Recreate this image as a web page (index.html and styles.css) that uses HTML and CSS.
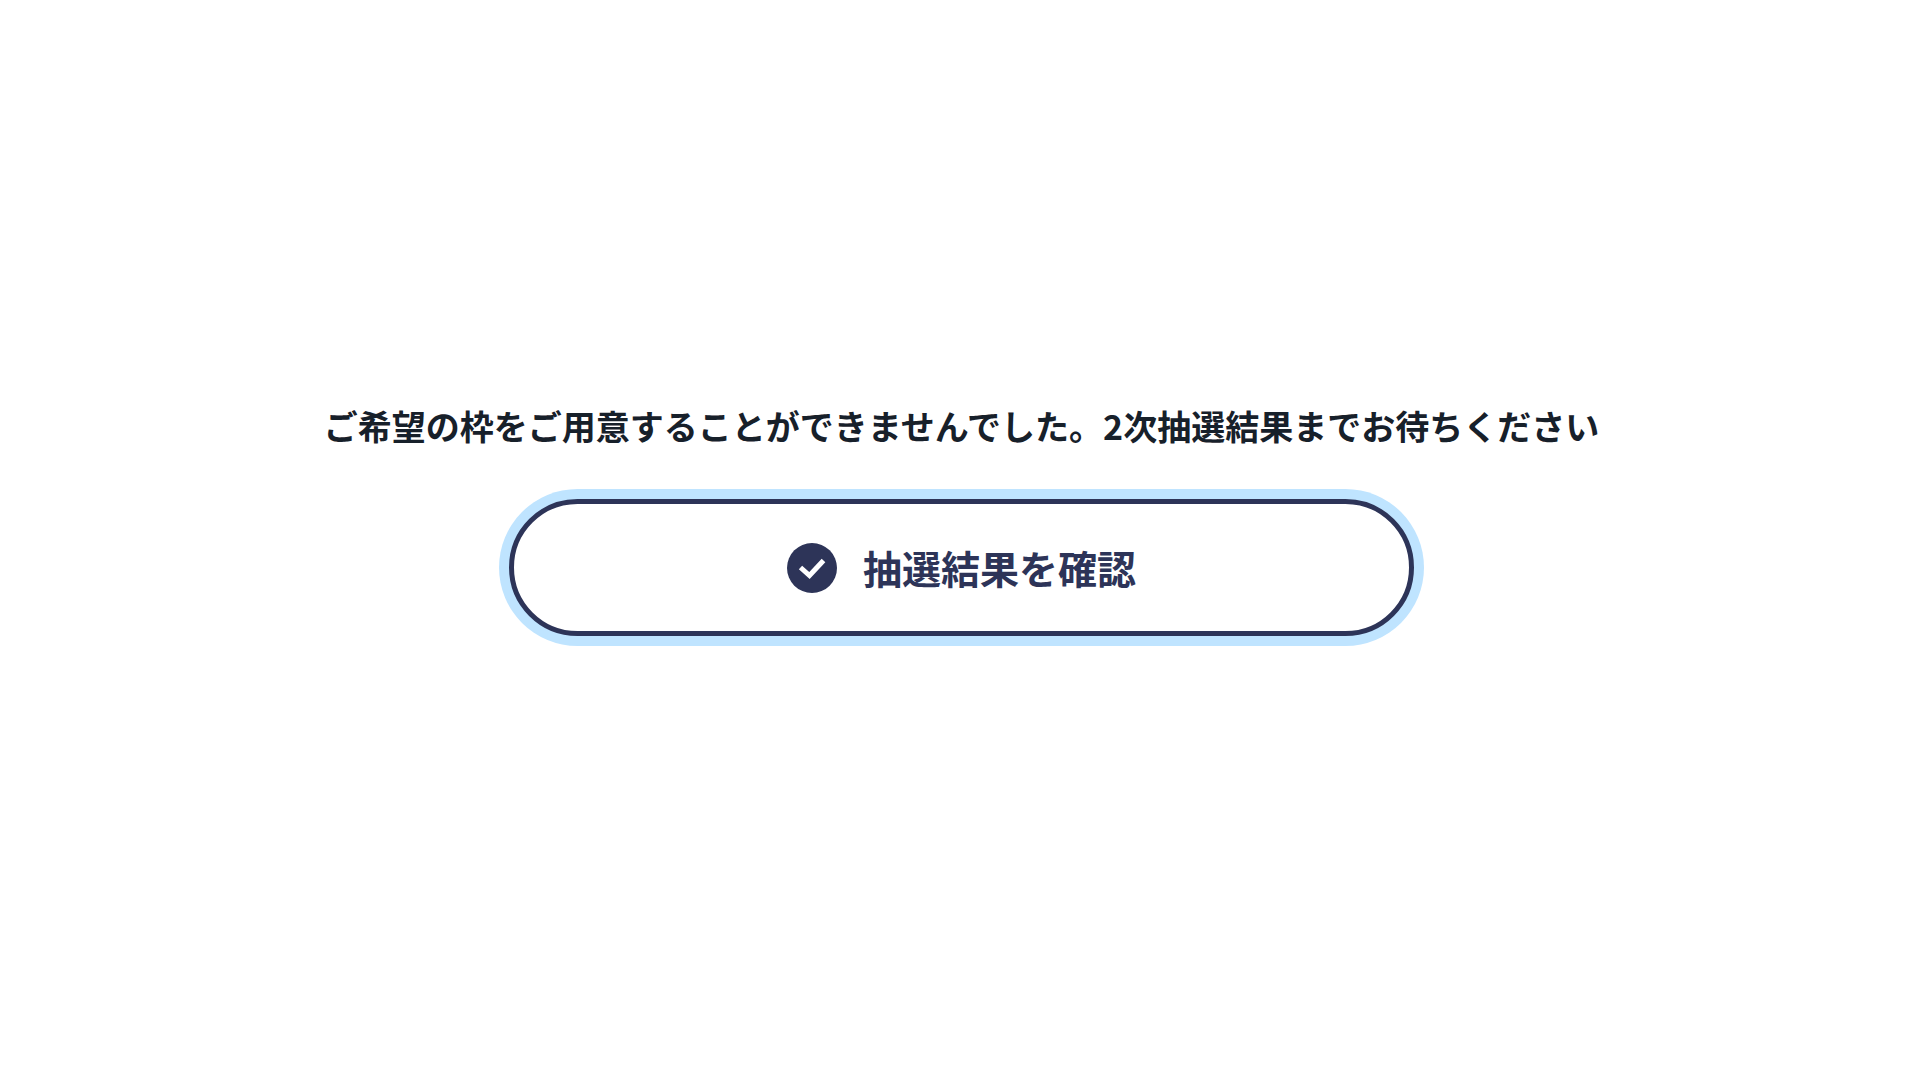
FILE: index.html
```html
<!DOCTYPE html>
<html lang="ja">
<head>
  <meta charset="utf-8">
  <meta name="viewport" content="width=device-width, initial-scale=1">
  <title>抽選結果</title>
  <link rel="stylesheet" href="styles.css">
</head>
<body>
  <main class="result">
    <p class="result-message">ご希望の枠をご用意することができませんでした。2次抽選結果までお待ちください</p>
    <button class="result-button" type="button">
      <svg class="result-icon" viewBox="0 0 50 50" aria-hidden="true">
        <circle cx="25" cy="25" r="25" fill="currentColor"/>
        <path d="M13.5 24.5L22.5 32.5L36.5 17.5" fill="none" stroke="#fff" stroke-width="5"/>
      </svg>
      <span>抽選結果を確認</span>
    </button>
  </main>
</body>
</html>
```
FILE: styles.css
```css
* {
  box-sizing: border-box;
}

body {
  margin: 0;
  background: #fff;
  color: #17202a;
  font-family: "Noto Sans CJK JP", sans-serif;
}

.result {
  display: flex;
  flex-direction: column;
  align-items: center;
  gap: 48px;
  padding: 400px 24px 40px 27px;
}

.result-message {
  margin: 0;
  font-size: 34px;
  font-weight: 700;
  line-height: 51px;
  text-align: center;
}

.result-button {
  display: flex;
  align-items: center;
  justify-content: center;
  gap: 26px;
  width: 100%;
  max-width: 905px;
  padding: 34px 24px;
  border: 5px solid #2d3458;
  border-radius: 69px;
  background: #fff;
  box-shadow: 0 0 0 10px #bfe4ff;
  color: #2d3458;
  font-family: inherit;
  font-size: 39px;
  font-weight: 700;
  line-height: 59px;
}

.result-icon {
  width: 50px;
  height: 50px;
}
```
